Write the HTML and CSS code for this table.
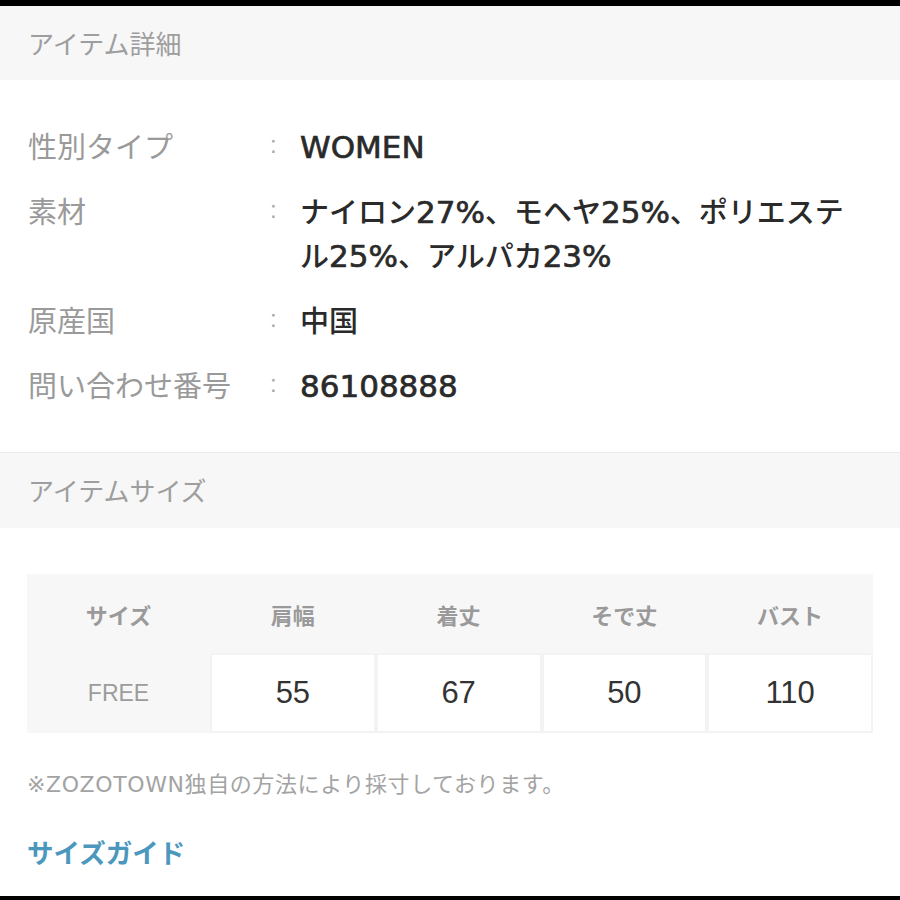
FILE: index.html
```html
<!DOCTYPE html>
<html lang="ja">
<head>
<meta charset="utf-8">
<title>アイテム詳細</title>
<link rel="stylesheet" href="styles.css">
</head>
<body>
<div class="page">
  <div class="topbar"></div>

  <section class="panel">
    <h2 class="panel-head">アイテム詳細</h2>
    <dl class="details">
      <div class="row">
        <dt>性別タイプ</dt><dd class="colon">:</dd>
        <dd class="value"><span class="lat">WOMEN</span></dd>
      </div>
      <div class="row">
        <dt>素材</dt><dd class="colon">:</dd>
        <dd class="value">ナイロン<span class="lat">27%</span>、モヘヤ<span class="lat">25%</span>、ポリエステ<br>ル<span class="lat">25%</span>、アルパカ<span class="lat">23%</span></dd>
      </div>
      <div class="row">
        <dt>原産国</dt><dd class="colon">:</dd>
        <dd class="value">中国</dd>
      </div>
      <div class="row">
        <dt>問い合わせ番号</dt><dd class="colon">:</dd>
        <dd class="value"><span class="lat">86108888</span></dd>
      </div>
    </dl>
  </section>

  <section class="panel panel-size">
    <h2 class="panel-head panel-head-bordered">アイテムサイズ</h2>
    <div class="size-table">
      <div class="cell th">サイズ</div>
      <div class="cell th">肩幅</div>
      <div class="cell th">着丈</div>
      <div class="cell th">そで丈</div>
      <div class="cell th">バスト</div>
      <div class="cell rh">FREE</div>
      <div class="cell td">55</div>
      <div class="cell td">67</div>
      <div class="cell td">50</div>
      <div class="cell td">110</div>
    </div>
    <p class="note">※ZOZOTOWN独自の方法により採寸しております。</p>
    <a class="guide" href="#">サイズガイド</a>
  </section>

  <div class="bottombar"></div>
</div>
</body>
</html>
```

FILE: styles.css
```css
html, body {
  margin: 0;
  padding: 0;
  background: #ffffff;
}

.page {
  width: 900px;
  height: 900px;
  display: flex;
  flex-direction: column;
  font-family: "Liberation Sans", "Noto Sans CJK JP", sans-serif;
  overflow: hidden;
}

.topbar {
  height: 6px;
  background: #000;
  flex: none;
}

.bottombar {
  margin-top: auto;
  height: 4px;
  background: #000;
  flex: none;
}

.panel-head {
  margin: 0;
  height: 74px;
  line-height: 74px;
  padding-left: 28px;
  background: #f7f7f7;
  color: #9e9e9e;
  font-size: 26px;
  font-weight: normal;
  font-family: "Noto Sans CJK JP", sans-serif;
}

.panel-head-bordered {
  border-top: 1px solid #ebebeb;
  height: 75px;
  line-height: 74px;
}

.details {
  margin: 0;
  padding: 43px 0 46px;
  display: flex;
  flex-direction: column;
  gap: 21px;
}

.row {
  display: grid;
  grid-template-columns: 242px 30px 1fr;
  padding-left: 28px;
  line-height: 44px;
}

.row dt {
  color: #9a9a9a;
  font-size: 29px;
  font-family: "Noto Sans CJK JP", sans-serif;
}

.row dd {
  margin: 0;
}

.colon {
  color: #a8a8a8;
  font-size: 24px;
}

.value {
  color: #2a2a2a;
  font-size: 29px;
  font-weight: 500;
  font-family: "Noto Sans CJK JP", sans-serif;
}

.value .lat {
  font-family: "DejaVu Sans", sans-serif;
  font-size: 31px;
  line-height: 1;
  -webkit-text-stroke: 0.7px currentColor;
}

.size-table {
  margin: 46px 27px 0;
  display: grid;
  grid-template-columns: 183px repeat(4, 1fr);
  grid-template-rows: 79px 80px;
  background: #f7f7f7;
}

.cell {
  display: flex;
  align-items: center;
  justify-content: center;
}

.th {
  color: #9a9a9a;
  font-size: 22px;
  font-weight: bold;
  font-family: "Noto Sans CJK JP", sans-serif;
}

.rh {
  color: #9c9c9c;
  font-size: 23px;
}

.td {
  background: #fff;
  border: 2px solid #f3f3f3;
  color: #333;
  font-size: 31px;
}

.note {
  margin: 37px 0 0 27px;
  line-height: 30px;
  font-size: 22px;
  letter-spacing: 0.6px;
  color: #a3a3a3;
  font-family: "DejaVu Sans", "Noto Sans CJK JP", sans-serif;
}

.guide {
  display: block;
  margin: 34px 0 0 27px;
  line-height: 36px;
  font-size: 26.5px;
  font-weight: bold;
  color: #4b97bd;
  text-decoration: none;
  font-family: "Noto Sans CJK JP", sans-serif;
}
```
